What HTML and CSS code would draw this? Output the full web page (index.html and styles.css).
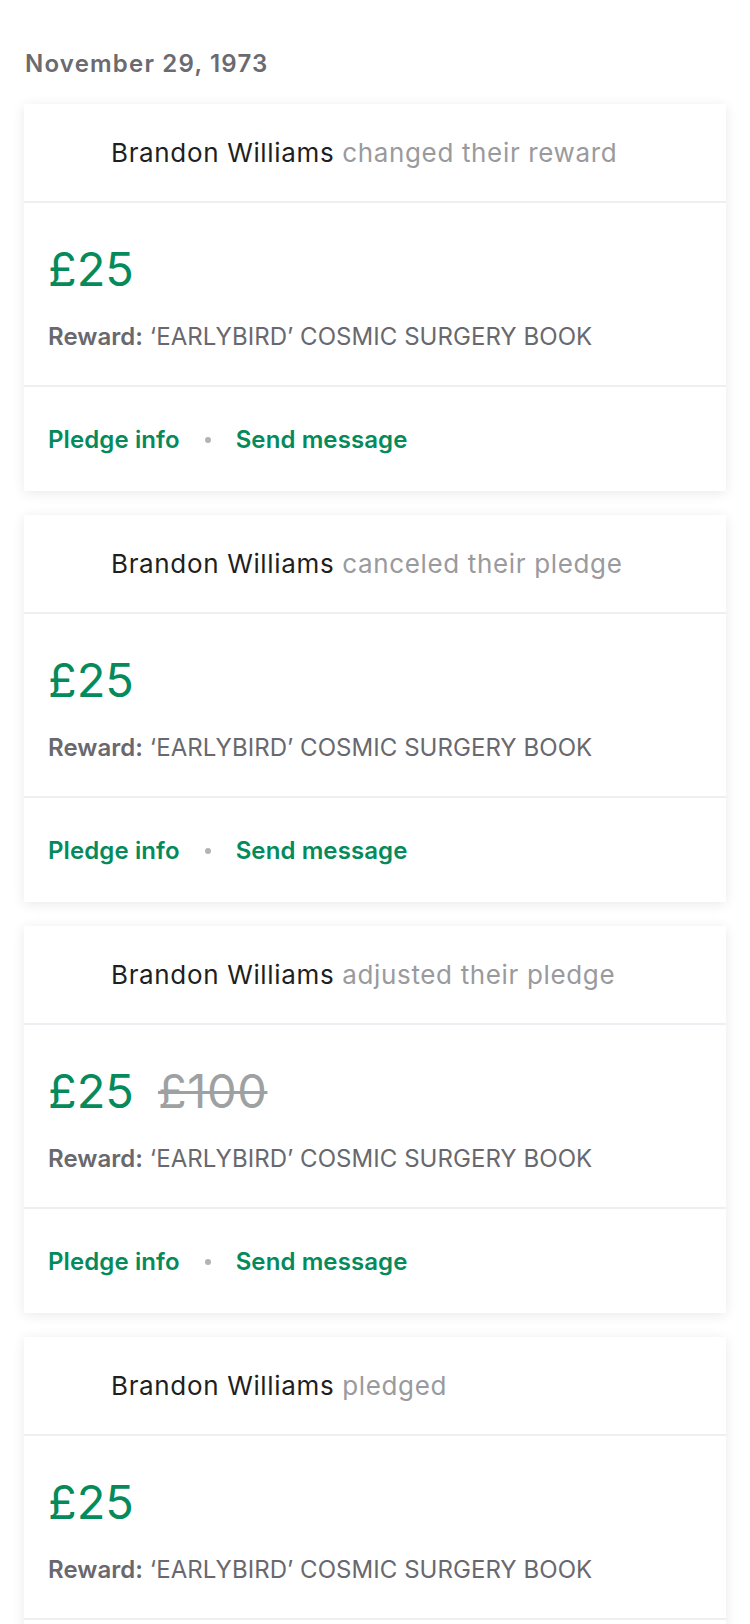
FILE: index.html
```html
<!DOCTYPE html>
<html lang="en">
<head>
<meta charset="utf-8">
<link rel="stylesheet" href="styles.css">
</head>
<body>
<main class="feed">
  <h2 class="date">November 29, 1973</h2>

  <section class="card">
    <div class="card-head"><span class="name">Brandon Williams</span> <span class="action">changed their reward</span></div>
    <div class="card-body">
      <div class="amounts"><span class="amount">£25</span></div>
      <p class="reward"><b>Reward:</b> ‘EARLYBIRD’ COSMIC SURGERY BOOK</p>
    </div>
    <div class="card-foot"><a class="link">Pledge info</a><span class="dot"></span><a class="link">Send message</a></div>
  </section>

  <section class="card">
    <div class="card-head"><span class="name">Brandon Williams</span> <span class="action">canceled their pledge</span></div>
    <div class="card-body">
      <div class="amounts"><span class="amount">£25</span></div>
      <p class="reward"><b>Reward:</b> ‘EARLYBIRD’ COSMIC SURGERY BOOK</p>
    </div>
    <div class="card-foot"><a class="link">Pledge info</a><span class="dot"></span><a class="link">Send message</a></div>
  </section>

  <section class="card">
    <div class="card-head"><span class="name">Brandon Williams</span> <span class="action">adjusted their pledge</span></div>
    <div class="card-body">
      <div class="amounts"><span class="amount">£25</span><s class="old">£100</s></div>
      <p class="reward"><b>Reward:</b> ‘EARLYBIRD’ COSMIC SURGERY BOOK</p>
    </div>
    <div class="card-foot"><a class="link">Pledge info</a><span class="dot"></span><a class="link">Send message</a></div>
  </section>

  <section class="card">
    <div class="card-head"><span class="name">Brandon Williams</span> <span class="action">pledged</span></div>
    <div class="card-body">
      <div class="amounts"><span class="amount">£25</span></div>
      <p class="reward"><b>Reward:</b> ‘EARLYBIRD’ COSMIC SURGERY BOOK</p>
    </div>
    <div class="card-foot"><a class="link">Pledge info</a><span class="dot"></span><a class="link">Send message</a></div>
  </section>
</main>
</body>
</html>
```
FILE: styles.css
```css
* { box-sizing: border-box; }
html, body { margin: 0; padding: 0; background: #fff; }
body {
  font-family: Inter, "Noto Sans", sans-serif;
  -webkit-font-smoothing: antialiased;
}
.feed {
  padding: 48px 24px 40px;
  display: flex;
  flex-direction: column;
  gap: 24px;
}
.date {
  margin: 0 0 0 1px;
  font-size: 24px;
  line-height: 32px;
  font-weight: 600;
  letter-spacing: 1.2px;
  color: #6a6a70;
}
.card {
  background: #fff;
  box-shadow: 0 2px 12px rgba(0, 0, 0, 0.09);
}
.card-head {
  height: 99px;
  padding-left: 87px;
  border-bottom: 2px solid #efeff3;
  font-size: 26px;
  line-height: 97px;
  letter-spacing: 0.65px;
  white-space: nowrap;
}
.name { color: #1f1f22; }
.action { color: #9a9a9e; }
.card-body {
  height: 184px;
  padding: 36px 24px 0;
  border-bottom: 2px solid #efeff3;
}
.amounts {
  display: flex;
  align-items: baseline;
  gap: 24px;
  height: 60px;
  line-height: 60px;
}
.amount {
  font-size: 47px;
  color: #058a5c;
}
.old {
  font-size: 47px;
  color: #9ea1a2;
  letter-spacing: 0.6px;
  text-decoration-thickness: 3px;
}
.reward {
  margin: 23px 0 0;
  font-size: 24px;
  line-height: 30px;
  color: #68686e;
  letter-spacing: 0.05px;
  white-space: nowrap;
}
.reward b { font-weight: 600; }
.card-foot {
  height: 104px;
  display: flex;
  align-items: center;
  padding: 2px 24px 0;
  font-size: 24px;
  line-height: 30px;
  font-weight: 600;
  letter-spacing: 0.1px;
}
.link { color: #058a5c; }
.dot {
  width: 6px;
  height: 6px;
  border-radius: 50%;
  background: #b3b3b6;
  margin: 0 25px 0 25px;
}
```
